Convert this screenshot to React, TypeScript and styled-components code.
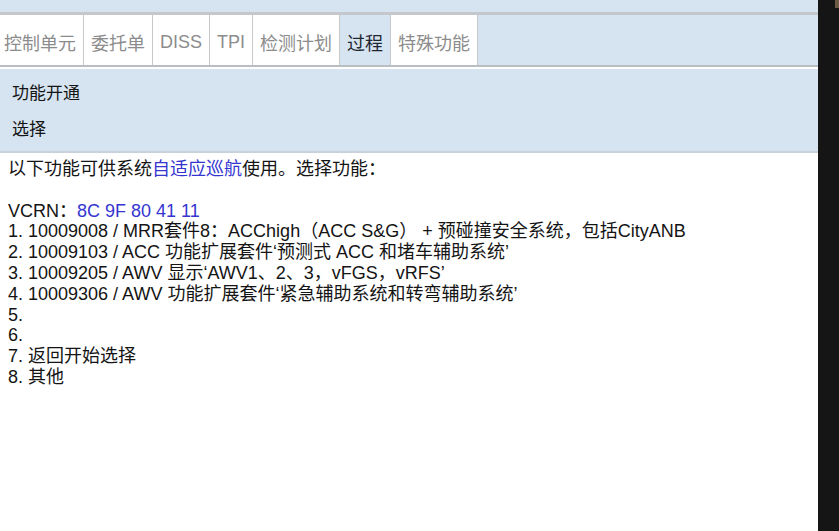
import React, { FC } from "react";
import styled, { createGlobalStyle } from "styled-components";

const GlobalStyle = createGlobalStyle`
  html, body {
    margin: 0;
    padding: 0;
    background: #151515;
  }
  body {
    font-family: "Liberation Sans", Arial, "Noto Sans CJK SC", sans-serif;
  }
`;

const tabs = ["控制单元", "委托单", "DISS", "TPI", "检测计划", "过程", "特殊功能"];
const activeTab = "过程";

const items = [
  "10009008 / MRR套件8：ACChigh（ACC S&G） + 预碰撞安全系统，包括CityANB",
  "10009103 / ACC 功能扩展套件‘预测式 ACC 和堵车辅助系统’",
  "10009205 / AWV 显示‘AWV1、2、3，vFGS，vRFS’",
  "10009306 / AWV 功能扩展套件‘紧急辅助系统和转弯辅助系统’",
  "",
  "",
  "返回开始选择",
  "其他",
];

const App: FC = () => {
  return (
    <>
      <GlobalStyle />
      <StyledScreen>
        <StyledMain>
          <StyledTopBand />
          <StyledTabBar>
            {tabs.map((tab) => (
              <StyledTab key={tab} $active={tab === activeTab}>
                {tab}
              </StyledTab>
            ))}
          </StyledTabBar>
          <StyledHeaderPanel>
            <StyledHeaderRow>功能开通</StyledHeaderRow>
            <StyledHeaderRow>选择</StyledHeaderRow>
          </StyledHeaderPanel>
          <StyledContent>
            <StyledLine>
              以下功能可供系统<StyledBlue>自适应巡航</StyledBlue>使用。选择功能：
            </StyledLine>
            <StyledLine>&nbsp;</StyledLine>
            <StyledLine>
              VCRN：<StyledBlue>8C 9F 80 41 11</StyledBlue>
            </StyledLine>
            {items.map((item, i) => (
              <StyledLine key={i}>{`${i + 1}. ${item}`}</StyledLine>
            ))}
          </StyledContent>
        </StyledMain>
        <StyledSideStrip>
          <StyledSideMark />
        </StyledSideStrip>
      </StyledScreen>
    </>
  );
};

const StyledScreen = styled.div`
  display: flex;
  width: 839px;
  height: 531px;
  overflow: hidden;
`;

const StyledMain = styled.div`
  width: 818px;
  display: flex;
  flex-direction: column;
  background: #ffffff;
`;

const StyledTopBand = styled.div`
  height: 12px;
  background: #d6e4f1;
  border-bottom: 3px solid #c4c8cc;
`;

const StyledTabBar = styled.div`
  display: flex;
  height: 50px;
  background: #d6e4f1;
  border-bottom: 2px solid #b9bec3;
`;

const StyledTab = styled.div<{ $active: boolean }>`
  display: flex;
  align-items: center;
  padding: 4px 7px 0 7px;
  font-size: 18px;
  color: ${(p) => (p.$active ? "#1e2630" : "#8c8c8c")};
  background: ${(p) => (p.$active ? "#d6e4f1" : "#ffffff")};
  border-right: 1px solid #c9c9c9;
  border-left: ${(p) => (p.$active ? "1px solid #c9c9c9" : "none")};
  margin-left: ${(p) => (p.$active ? "-1px" : "0")};
  font-family: "Liberation Sans", Arial, "Noto Sans CJK SC", sans-serif;

  &:first-child {
    padding-left: 4px;
  }
`;

const StyledHeaderPanel = styled.div`
  margin-top: 1px;
  height: 78px;
  padding-top: 4px;
  background: #d6e4f1;
  border-top: 1px solid #ffffff;
  border-bottom: 2px solid #c9d2da;
  font-family: "Noto Sans CJK SC", sans-serif;
`;

const StyledHeaderRow = styled.div`
  height: 36px;
  display: flex;
  align-items: center;
  padding-left: 12px;
  font-size: 17px;
  color: #141414;
`;

const StyledContent = styled.div`
  flex: 1;
  padding: 6px 8px;
  font-size: 18px;
  color: #141414;
  font-family: "Liberation Sans", Arial, "Noto Sans CJK SC", sans-serif;
`;

const StyledLine = styled.div`
  line-height: 20.8px;
  white-space: pre;
`;

const StyledBlue = styled.span`
  color: #3535d0;
`;

const StyledSideStrip = styled.div`
  flex: 1;
  background: #151515;
  position: relative;
`;

const StyledSideMark = styled.div`
  position: absolute;
  top: 0;
  right: 0;
  width: 4px;
  height: 8px;
  background: #6b5a44;
`;

export default App;
